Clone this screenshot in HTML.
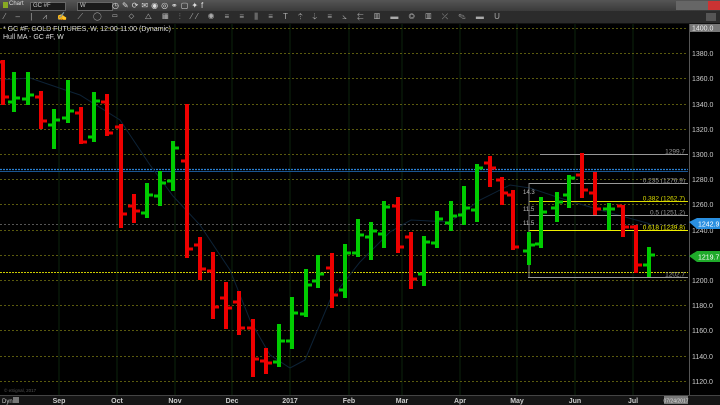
<!DOCTYPE html>
<html><head><meta charset="utf-8"><style>
html,body{margin:0;padding:0;background:#000;width:720px;height:405px;overflow:hidden;font-family:"Liberation Sans",sans-serif}
.tb1{position:absolute;left:0;top:0;width:720px;height:11px;background:linear-gradient(#555,#3a3a3a)}
.tb2{position:absolute;left:0;top:11px;width:720px;height:12px;background:#2b2b2b;border-bottom:1px solid #111}
.dd{position:absolute;top:2px;height:7px;background:#1a1a1a;border:1px solid #666;color:#ccc;font-size:6px;line-height:7px;padding-left:2px}
</style></head><body>
<div class="tb1">
<div style="position:absolute;left:3px;top:2px;width:5px;height:6px;background:#8a2"></div>
<div style="position:absolute;left:9px;top:1px;color:#ddd;font-size:6px">Chart</div>
<div class="dd" style="left:30px;width:32px">GC #F</div>
<div class="dd" style="left:77px;width:32px">W</div>
<div style="position:absolute;left:112px;top:1px;color:#ddd;font-size:8px;letter-spacing:3px">◷✎⟳✉◉◎⚭▢✦f</div>
<div style="position:absolute;left:676px;top:1px;width:44px;height:9px;background:#666"></div>
<div style="position:absolute;left:708px;top:1px;width:12px;height:9px;background:#c33"></div>
</div>
<div class="tb2"><div style="position:absolute;left:4px;top:1px;color:#aaa;font-size:8px;letter-spacing:4px">⁄ ‒ | ⩘ ✍ ⟋ ◯ ▭ ◇ △ ▦ ⫶ ⁄⁄ ◉ ≡ ≡ ⫼ ≡ T ⇡ ⇣ ≡ ⦣ ⇇ ▥ ▬ ◎ ▥ ⤫ ✎ ▬ U</div>
<div style="position:absolute;left:706px;top:2px;width:10px;height:8px;background:#555"></div></div>
<svg id="c" width="720" height="405" style="position:absolute;left:0;top:0" xmlns="http://www.w3.org/2000/svg"></svg>
<script>
var s='';
var yp=function(p){return 280-(p-1200)*1.26;};
[59,117,175,232,290,349,402,460,517,575,633].forEach(function(x){s+='<line x1="'+x+'" y1="24" x2="'+x+'" y2="395" stroke="#0c240c" stroke-width="1"/>';});
for(var p=1120;p<=1400;p+=20){var y=Math.round(yp(p))+.5;s+='<line x1="0" y1="'+y+'" x2="688" y2="'+y+'" stroke="#5a5a0e" stroke-width="1" stroke-dasharray="2,2"/>';
if(p<1400)s+='<text x="692" y="'+(y+2.5)+'" fill="#ccc" font-size="7">'+p.toFixed(1)+'</text>';}
s+='<rect x="690" y="24" width="30" height="8" fill="#777"/><text x="692" y="30.5" fill="#eee" font-size="7">1400.0</text>';
s+='<line x1="0" y1="169.5" x2="688" y2="169.5" stroke="#2a7fd0" stroke-width="1.2" stroke-dasharray="2,1"/><line x1="0" y1="171.5" x2="688" y2="171.5" stroke="#1a5590" stroke-width="1"/>';
s+='<line x1="0" y1="224.5" x2="688" y2="224.5" stroke="#555" stroke-dasharray="2,2"/>';
s+='<line x1="0" y1="272.5" x2="688" y2="272.5" stroke="#cc0" stroke-width="1" stroke-dasharray="2,1"/>';
s+='<polyline fill="none" stroke="#0d2236" stroke-width="1" points="0,80 30,78 80,95 120,120 150,165 173,196 200,225 230,270 250,320 270,355 290,368 305,360 330,300 360,262 390,232 411,220 450,222 480,200 510,185 530,188 560,198 600,210 647,223 652,225"/>';
var fib=[[1299.7,'1299.7','#999',540],[1276.9,'0.235 (1276.9)','#999',529],[1262.7,'0.382 (1262.7)','#dd0',529],[1251.2,'0.5 (1251.2)','#999',529],[1239.8,'0.618 (1239.8)','#ee0',529],[1202.7,'1202.7','#999',528]];
fib.forEach(function(f){var y=Math.round(yp(f[0]))+.5;s+='<line x1="'+f[3]+'" y1="'+y+'" x2="688" y2="'+y+'" stroke="'+f[2]+'" stroke-width="1"/>';s+='<text x="685" y="'+(y-1)+'" fill="'+f[2]+'" font-size="6.5" text-anchor="end">'+f[1]+'</text>';});
s+='<line x1="529" y1="183" x2="529" y2="277" stroke="#777"/>';
s+='<text x="523" y="194" fill="#bbb" font-size="6">14.3</text><text x="523" y="211" fill="#bbb" font-size="6">11.5</text><text x="523" y="225" fill="#bbb" font-size="6">11.5</text>';
var b=[[3,60,105,62,97,'r'],[14,72,112,102,98,'g'],[28,72,105,99,95,'g'],[41,91,129,97,121,'r'],[54,109,149,125,120,'g'],[68,80,123,118,111,'g'],[81,107,144,113,142,'r'],[94,92,142,137,101,'g'],[107,94,136,102,133,'r'],[121,124,228,127,214,'r'],[134,194,223,206,211,'r'],[147,183,218,213,195,'g'],[160,171,206,196,183,'g'],[173,141,191,181,148,'g'],[187,104,258,161,249,'r'],[200,237,280,245,269,'r'],[213,252,319,271,307,'r'],[226,282,329,298,308,'r'],[239,291,335,302,328,'r'],[253,319,377,328,359,'r'],[266,348,374,361,363,'r'],[279,324,367,362,341,'g'],[292,297,349,341,313,'g'],[306,269,317,314,285,'g'],[318,255,288,281,274,'g'],[332,253,308,268,295,'r'],[345,244,298,290,253,'g'],[358,219,257,253,235,'g'],[371,222,260,237,231,'g'],[384,201,248,234,207,'g'],[398,197,253,206,247,'r'],[411,232,289,237,279,'r'],[424,236,286,274,242,'g'],[437,211,248,243,219,'g'],[451,201,231,223,216,'g'],[464,186,225,215,208,'g'],[477,164,222,210,168,'g'],[490,156,187,163,168,'r'],[502,177,205,180,193,'r'],[513,190,250,195,247,'r'],[529,232,265,251,245,'g'],[541,197,248,244,212,'g'],[557,192,222,208,202,'g'],[569,175,208,195,178,'g'],[582,153,198,175,190,'r'],[595,172,215,193,209,'r'],[609,203,230,209,209,'g'],[623,205,237,206,227,'r'],[636,225,273,227,265,'r'],[649,247,277,265,255,'g']];
b.forEach(function(a){var c=a[5]=='r'?'#e00':'#0c0';var x=a[0];
s+='<rect x="'+(x-2)+'" y="'+a[1]+'" width="4" height="'+(a[2]-a[1])+'" fill="'+c+'"/>';
s+='<rect x="'+(x-6)+'" y="'+(a[3]-1.5)+'" width="5" height="3" fill="'+c+'"/>';
s+='<rect x="'+(x+1)+'" y="'+(a[4]-1.5)+'" width="5" height="3" fill="'+c+'"/>';});
s+='<line x1="689.5" y1="24" x2="689.5" y2="395" stroke="#555"/>';
s+='<path d="M689 222 L697 218 L720 218 L720 229 L697 229 Z" fill="#2a8fe0"/><text x="698" y="226.5" fill="#fff" font-size="7">1242.9</text>';
s+='<path d="M689 256 L697 251 L720 251 L720 262 L697 262 Z" fill="#1faa2a"/><text x="698" y="259.5" fill="#fff" font-size="7">1219.7</text>';
s+='<rect x="0" y="395" width="720" height="10" fill="#151515"/><line x1="0" y1="395.5" x2="720" y2="395.5" stroke="#444"/>';
s+='<text x="2" y="403" fill="#ccc" font-size="6">Dyn</text><rect x="13" y="397" width="6" height="6" fill="#777"/>';
[['Sep',59],['Oct',117],['Nov',175],['Dec',232],['2017',290],['Feb',349],['Mar',402],['Apr',460],['May',517],['Jun',575],['Jul',633]].forEach(function(m){s+='<text x="'+m[1]+'" y="403" fill="#ccc" font-size="7" font-weight="bold" text-anchor="middle">'+m[0]+'</text>';});
s+='<rect x="664" y="396" width="24" height="8" fill="#777"/><text x="676" y="402.5" fill="#ddd" font-size="5" text-anchor="middle">07/24/2017</text>';
s+='<text x="4" y="392" fill="#555" font-size="4.5">© eSignal, 2017</text>';
s+='<text x="3" y="31" fill="#ddd" font-size="7">* GC #F, GOLD FUTURES, W, 12:00-11:00 (Dynamic)</text><text x="3" y="39" fill="#ddd" font-size="7">Hull MA - GC #F, W</text>';
document.getElementById('c').innerHTML=s;
</script>
</body></html>
